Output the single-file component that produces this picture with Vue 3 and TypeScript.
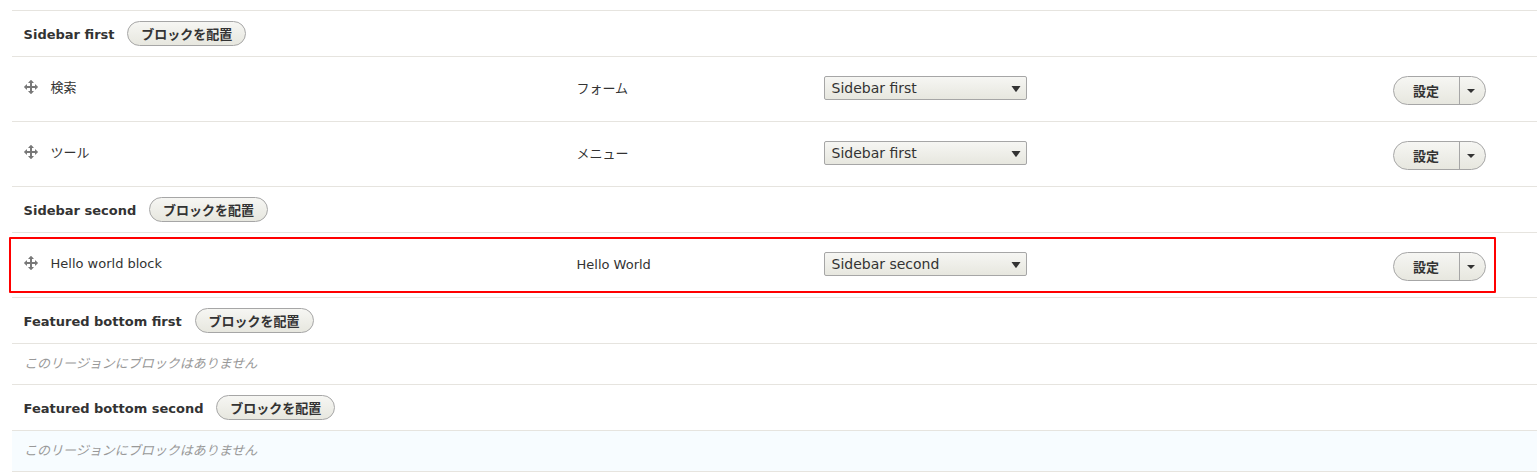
<script setup lang="ts">
interface Block {
  name: string
  category: string
  highlighted?: boolean
}

interface Region {
  title: string
  blocks: Block[]
  hovered?: boolean
}

const regions: Region[] = [
  {
    title: 'Sidebar first',
    blocks: [
      { name: '検索', category: 'フォーム' },
      { name: 'ツール', category: 'メニュー' },
    ],
  },
  {
    title: 'Sidebar second',
    blocks: [{ name: 'Hello world block', category: 'Hello World', highlighted: true }],
  },
  { title: 'Featured bottom first', blocks: [] },
  { title: 'Featured bottom second', blocks: [], hovered: true },
]
</script>

<template>
  <main class="block-layout">
    <section v-for="region in regions" :key="region.title">
      <header class="region-title">
        <h3>{{ region.title }}</h3>
        <button type="button" class="place">ブロックを配置</button>
      </header>
      <div v-for="block in region.blocks" :key="block.name" class="block-row">
        <div class="name">
          <svg class="handle" width="14" height="14" viewBox="1 1 14 14" aria-hidden="true">
            <path
              fill="#787878"
              d="M14.904 7.753l-2.373-2.372c-.291-.292-.529-.193-.529.22v1.399h-3v-3h1.398c.414 0 .512-.239.221-.53l-2.371-2.372c-.137-.136-.36-.136-.497 0l-2.372 2.372c-.292.292-.193.53.22.53h1.4v3h-3v-1.399c0-.413-.239-.511-.53-.22l-2.372 2.372c-.136.136-.136.359 0 .494l2.372 2.372c.291.292.53.193.53-.22v-1.399h3v3h-1.4c-.413 0-.511.238-.22.529l2.374 2.373c.137.137.36.137.495 0l2.373-2.373c.29-.291.19-.529-.222-.529h-1.399v-3h3v1.4c0 .412.238.511.529.219l2.373-2.371c.137-.137.137-.359 0-.495z"
            />
          </svg>
          <span>{{ block.name }}</span>
        </div>
        <div class="category">{{ block.category }}</div>
        <div class="select">
          <span>{{ region.title }}</span>
          <svg width="10" height="6" viewBox="0 0 10 6" aria-hidden="true">
            <path fill="#333" d="M.5 0H9.5L5.4 5.8H4.6Z" />
          </svg>
        </div>
        <div class="operations">
          <button type="button" class="configure">設定</button>
          <button type="button" class="toggle" aria-label="その他の操作">
            <svg width="8" height="4" viewBox="0 0 8 4" aria-hidden="true">
              <path fill="#333" d="M0 0H8L4 4Z" />
            </svg>
          </button>
        </div>
        <div v-if="block.highlighted" class="highlight"></div>
      </div>
      <p v-if="!region.blocks.length" class="empty" :class="{ hovered: region.hovered }">
        <em>このリージョンにブロックはありません</em>
      </p>
    </section>
  </main>
</template>

<style>
body {
  background: #fff;
}
</style>

<style scoped>
.block-layout {
  box-sizing: border-box;
  height: 474px;
  overflow: hidden;
  margin-top: 0;
  padding: 10px 0 0 12px;
  color: #333;
  font: 13px/20px 'DejaVu Sans', 'Noto Sans CJK JP', sans-serif;
}
section:first-child {
  border-top: 1px solid #e6e4df;
}
button {
  box-sizing: border-box;
  margin: 0;
  padding: 0;
  border: 0;
  color: #333;
  font: bold 13px/20px 'DejaVu Sans', 'Noto Sans CJK JP', sans-serif;
}
.region-title {
  box-sizing: border-box;
  display: flex;
  align-items: flex-start;
  gap: 12.8px;
  height: 46px;
  padding: 10px 0 0 11.6px;
  border-bottom: 1px solid #e6e4df;
}
h3 {
  margin: 4px 0 0;
  font-size: 13px;
  line-height: 20px;
}
.place {
  width: 119px;
  height: 25px;
  padding-top: 2px;
  border: 1px solid #a6a6a6;
  border-radius: 20px;
  background: linear-gradient(#f6f6f3, #e7e7df);
}
.block-row {
  position: relative;
  box-sizing: border-box;
  display: grid;
  grid-template-columns: 552.5px 247.5px 569px 93px;
  align-items: start;
  height: 65px;
  padding: 19px 0 0 12px;
  border-bottom: 1px solid #e6e4df;
}
.name {
  display: flex;
  align-items: center;
  gap: 12.5px;
  height: 22px;
}
.name span {
  padding-top: 2px;
}
.category {
  padding-top: 3px;
}
.select {
  box-sizing: border-box;
  display: flex;
  align-items: center;
  justify-content: space-between;
  width: 203px;
  height: 24px;
  padding: 0 5px 0 6.5px;
  border: 1px solid #a6a6a6;
  border-radius: 2px;
  background: linear-gradient(#f6f6f3, #e7e7df);
  font-size: 14px;
}
.select svg {
  margin-top: 2px;
}
.operations {
  box-sizing: border-box;
  display: flex;
  width: 93px;
  height: 29px;
  border: 1px solid #a6a6a6;
  border-radius: 15px;
  background: linear-gradient(#f6f6f3, #e7e7df);
  overflow: hidden;
}
.configure {
  width: 65px;
  padding: 2px 1px 0 0;
  background: none;
}
.toggle {
  display: flex;
  align-items: center;
  width: 26px;
  padding-left: 7px;
  border-left: 1px solid #a6a6a6;
  background: none;
}
.highlight {
  position: absolute;
  top: 4px;
  left: -3px;
  box-sizing: border-box;
  width: 1487px;
  height: 56px;
  border: 2px solid #f00;
  border-radius: 1px;
  pointer-events: none;
}
.empty {
  box-sizing: border-box;
  height: 41px;
  margin: 0;
  padding: 10px 12px;
  border-bottom: 1px solid #e6e4df;
  color: #999;
}
.empty.hovered {
  background: #f7fcff;
}
</style>
